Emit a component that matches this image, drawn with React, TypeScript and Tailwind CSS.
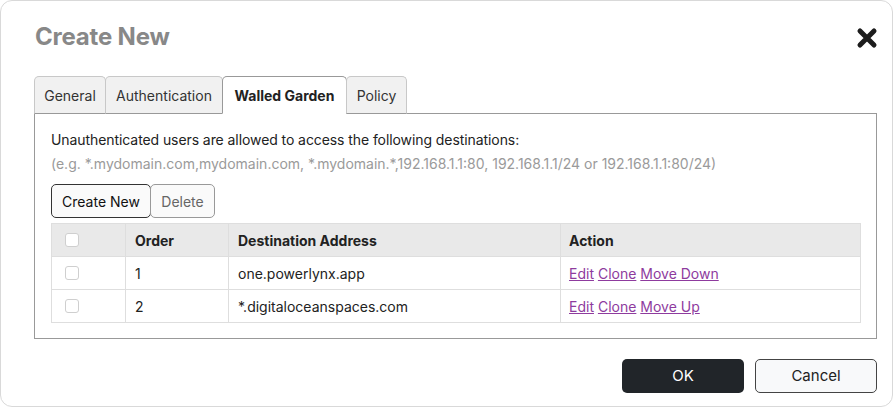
import React from 'react';

const tabs = [
  { label: 'General', w: 'w-[72px]', active: false },
  { label: 'Authentication', w: 'w-[118px]', active: false },
  { label: 'Walled Garden', w: 'w-[125px]', active: true },
  { label: 'Policy', w: 'w-[61px]', active: false },
];

const rows = [
  { order: 1, address: 'one.powerlynx.app', move: 'Move Down' },
  { order: 2, address: '*.digitaloceanspaces.com', move: 'Move Up' },
];

const Box: React.FC = () => (
  <span className="block w-[14px] h-[14px] rounded-[3px] border border-[#cfcfcf] bg-white" />
);

const App: React.FC = () => {
  return (
    <div className="w-[893px] h-[407px] bg-white font-['Inter',sans-serif] text-[#222]">
      <div className="w-[893px] h-[407px] border border-[#d9d9d9] rounded-[12px] pl-[33px] pr-[15px] pt-[19px] flex flex-col">
        {/* header */}
        <div className="flex items-center justify-between h-[34px]">
          <h1 className="text-[24px] font-bold text-[#888] leading-[34px] pl-[1px] tracking-[-0.2px]">Create New</h1>
          <svg width="22" height="22" viewBox="0 0 22 22" className="mr-[-1px] mt-[1px]">
            <path d="M4 4 L18 18 M18 4 L4 18" stroke="#1c1c1c" strokeWidth="5" strokeLinecap="round" />
          </svg>
        </div>

        {/* tabs */}
        <div className="flex mt-[22px] relative z-10">
          {tabs.map((t) => (
            <div
              key={t.label}
              className={`${t.w} h-[38px] -mr-px flex items-center justify-center text-[14px] rounded-t-[5px] border ${
                t.active
                  ? 'bg-white border-[#999] border-b-white font-bold text-[#222]'
                  : 'bg-[#f1f1f1] border-[#c8c8c8] border-b-[#999] text-[#333]'
              }`}
            >
              {t.label}
            </div>
          ))}
        </div>

        {/* content */}
        <div className="-mt-px border border-[#999] h-[226px] pl-[16px] pr-[15px] pt-[16px]">
          <p className="text-[14px] leading-[20px] text-[#222] tracking-[-0.08px]">
            Unauthenticated users are allowed to access the following destinations:
          </p>
          <p className="text-[14px] leading-[20px] text-[#9a9a9a] mt-[4px]">
            (e.g. *.mydomain.com,mydomain.com, *.mydomain.*,192.168.1.1:80, 192.168.1.1/24 or 192.168.1.1:80/24)
          </p>
          <div className="flex mt-[10px]">
            <button className="w-[100px] h-[34px] rounded-[5px] border border-[#333] bg-[#fafafa] text-[14px] text-[#111]">
              Create New
            </button>
            <button className="w-[65px] h-[34px] rounded-[5px] border border-[#999] bg-[#fafafa] text-[14px] text-[#666] -ml-px">
              Delete
            </button>
          </div>

          <table className="w-[809px] mt-[5px] border-collapse text-[14px] table-fixed">
            <colgroup>
              <col className="w-[74px]" />
              <col className="w-[103px]" />
              <col className="w-[332px]" />
              <col className="w-[300px]" />
            </colgroup>
            <thead>
              <tr className="bg-[#e9e9e9] h-[33px]">
                <th className="border border-[#dedede] pl-[13px] text-left"><Box /></th>
                <th className="border border-[#dedede] pl-[9px] text-left font-bold">Order</th>
                <th className="border border-[#dedede] pl-[9px] text-left font-bold">Destination Address</th>
                <th className="border border-[#dedede] pl-[8px] text-left font-bold">Action</th>
              </tr>
            </thead>
            <tbody>
              {rows.map((r) => (
                <tr key={r.order} className="h-[33px]">
                  <td className="border border-[#dedede] pl-[13px]"><Box /></td>
                  <td className="border border-[#dedede] pl-[9px]">{r.order}</td>
                  <td className="border border-[#dedede] pl-[9px]">{r.address}</td>
                  <td className="border border-[#dedede] pl-[8px] text-[#8e3b9e]">
                    <a className="underline">Edit</a>{' '}
                    <a className="underline">Clone</a>{' '}
                    <a className="underline">{r.move}</a>
                  </td>
                </tr>
              ))}
            </tbody>
          </table>
        </div>

        {/* footer */}
        <div className="flex justify-end gap-[11px] mt-[20px]">
          <button className="w-[122px] h-[34px] rounded-[5px] bg-[#212529] text-white text-[15px]">OK</button>
          <button className="w-[122px] h-[34px] rounded-[5px] border border-[#444] bg-[#f8f9fa] text-[15px] text-[#222]">
            Cancel
          </button>
        </div>
      </div>
    </div>
  );
};

export default App;
